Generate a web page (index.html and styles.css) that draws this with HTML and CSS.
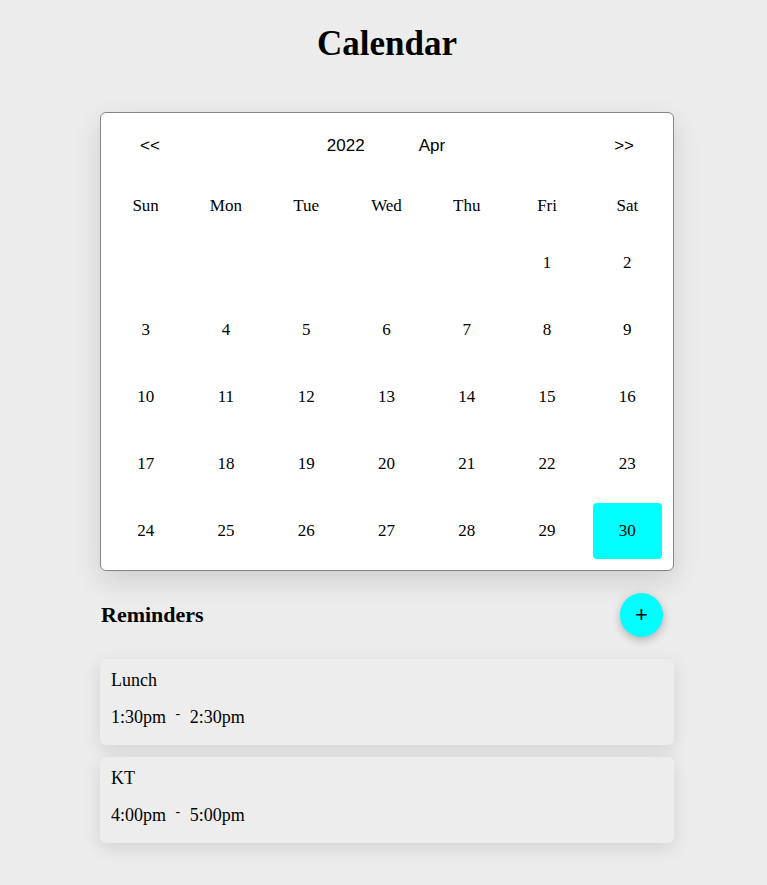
FILE: index.html
```html
<!DOCTYPE html>
<html lang="en">
<head>
    <meta charset="UTF-8">
    <meta name="viewport" content="width=device-width, initial-scale=1.0">
    <title>Calendar</title>
    <link rel="stylesheet" href="styles.css">
</head>
<body>
    <div class="wrapper">
        <h1 class="title">Calendar</h1>

        <div class="calendar">
            <div class="cal-header">
                <button class="nav">&lt;&lt;</button>
                <div class="current">
                    <span>2022</span>
                    <span>Apr</span>
                </div>
                <button class="nav">&gt;&gt;</button>
            </div>

            <div class="weekdays">
                <div>Sun</div><div>Mon</div><div>Tue</div><div>Wed</div><div>Thu</div><div>Fri</div><div>Sat</div>
            </div>

            <div class="days">
                <div class="day"></div><div class="day"></div><div class="day"></div><div class="day"></div><div class="day"></div>
                <div class="day">1</div><div class="day">2</div>
                <div class="day">3</div><div class="day">4</div><div class="day">5</div><div class="day">6</div><div class="day">7</div><div class="day">8</div><div class="day">9</div>
                <div class="day">10</div><div class="day">11</div><div class="day">12</div><div class="day">13</div><div class="day">14</div><div class="day">15</div><div class="day">16</div>
                <div class="day">17</div><div class="day">18</div><div class="day">19</div><div class="day">20</div><div class="day">21</div><div class="day">22</div><div class="day">23</div>
                <div class="day">24</div><div class="day">25</div><div class="day">26</div><div class="day">27</div><div class="day">28</div><div class="day">29</div><div class="day selected">30</div>
            </div>
        </div>

        <div class="reminders-head">
            <h3>Reminders</h3>
            <button class="add">+</button>
        </div>

        <div class="reminder">
            <p class="r-title">Lunch</p>
            <p class="r-time">1:30pm <span class="dash">-</span> 2:30pm</p>
        </div>
        <div class="reminder">
            <p class="r-title">KT</p>
            <p class="r-time">4:00pm <span class="dash">-</span> 5:00pm</p>
        </div>
    </div>
</body>
</html>
```

FILE: styles.css
```css
body {
    margin: 0;
    padding-left: 7px;
    background-color: #ececec;
    font-family: "Liberation Serif", "Times New Roman", serif;
    color: #000;
}

.wrapper {
    width: 574px;
    margin: 0 auto;
    padding-bottom: 40px;
}

.title {
    font-size: 35px;
    text-align: center;
    margin: 0;
    padding-top: 24px;
    line-height: 40px;
    margin-bottom: 48px;
}

.calendar {
    background: #fff;
    border: 1px solid #858585;
    border-radius: 6px;
    padding: 11px 11px 11px 10px;
    box-shadow: 0 10px 28px rgba(0, 0, 0, 0.12);
}

.cal-header {
    height: 44px;
    display: flex;
    align-items: center;
    justify-content: space-between;
    padding: 0 28px 0 29px;
    margin-bottom: 21px;
    font-family: "Liberation Sans", Arial, sans-serif;
    font-size: 17px;
}

.nav {
    background: none;
    border: none;
    padding: 0;
    font: inherit;
    color: #000;
    cursor: pointer;
}

.current {
    display: flex;
    gap: 54px;
    margin-right: 2px;
}

.weekdays, .days {
    display: grid;
    grid-template-columns: repeat(7, 1fr);
    column-gap: 11px;
    font-size: 17px;
    text-align: center;
}

.weekdays div {
    height: 34px;
    line-height: 34px;
}

.days {
    margin-top: 12px;
    grid-auto-rows: 56px;
    row-gap: 11px;
}

.day {
    display: flex;
    align-items: center;
    justify-content: center;
    border-radius: 4px;
}

.selected {
    background-color: #00ffff;
}

.reminders-head {
    display: flex;
    justify-content: space-between;
    align-items: center;
    margin-top: 22px;
    padding: 0 11px 0 1px;
}

.reminders-head h3 {
    margin: 0;
    font-size: 22px;
}

.add {
    width: 43px;
    height: 44px;
    border-radius: 50%;
    border: none;
    background-color: #00ffff;
    font-size: 22px;
    color: #000;
    font-family: "Liberation Sans", Arial, sans-serif;
    box-shadow: 0 3px 8px rgba(0, 0, 0, 0.25);
    cursor: pointer;
    padding: 0;
}

.reminder {
    margin-top: 22px;
    background-color: #ededed;
    border-radius: 6px;
    padding: 11px 11px 17px;
    box-shadow: 0 5px 18px rgba(0, 0, 0, 0.11);
    font-size: 18px;
}

.reminder + .reminder {
    margin-top: 12px;
}

.reminder p {
    margin: 0;
    line-height: 21px;
}

.r-time {
    margin-top: 16px !important;
}

.dash {
    font-size: 14px;
    line-height: 0;
    vertical-align: 5px;
    margin: 0 5px;
}
```
